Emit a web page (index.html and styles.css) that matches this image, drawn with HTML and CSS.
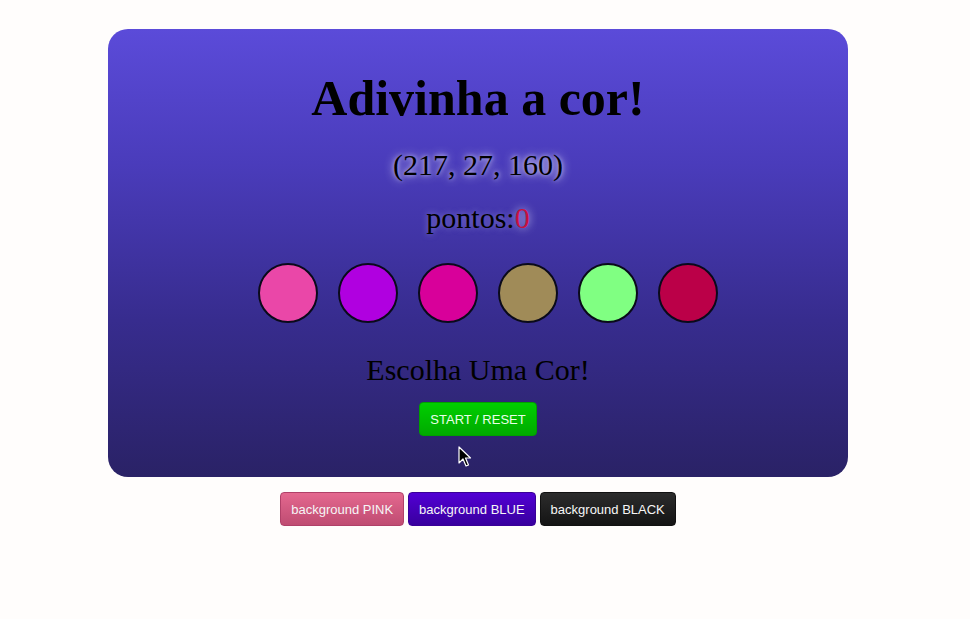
FILE: index.html
```html
<!DOCTYPE html>
<html lang="pt">
<head>
<meta charset="utf-8">
<title>Adivinha a cor!</title>
<link rel="stylesheet" href="styles.css">
</head>
<body>
<div class="page">
  <main class="card">
    <h1 class="title">Adivinha a cor!</h1>
    <p class="rgb">(217, 27, 160)</p>
    <p class="score">pontos:<span class="points">0</span></p>
    <div class="circles">
      <span class="circle c1"></span>
      <span class="circle c2"></span>
      <span class="circle c3"></span>
      <span class="circle c4"></span>
      <span class="circle c5"></span>
      <span class="circle c6"></span>
    </div>
    <p class="message">Escolha Uma Cor!</p>
    <button class="btn start">START / RESET</button>
  </main>
  <div class="themes">
    <button class="btn theme pink">background PINK</button>
    <button class="btn theme blue">background BLUE</button>
    <button class="btn theme black">background BLACK</button>
  </div>
  <svg class="cursor" width="14" height="22" viewBox="0 0 14 22"><path d="M1 1 L1 17 L5 13 L8 20 L10.5 19 L7.5 12 L12.5 12 Z" fill="#000" stroke="#fff" stroke-width="1.2" stroke-linejoin="round"/></svg>
</div>
</body>
</html>
```

FILE: styles.css
```css
html, body {
  margin: 0;
  padding: 0;
  background: #fffdfc;
}
.page {
  position: relative;
  width: 956px;
  padding-top: 29px;
  display: flex;
  flex-direction: column;
  align-items: center;
  font-family: "Liberation Serif", "Times New Roman", serif;
}
.card {
  width: 740px;
  height: 448px;
  box-sizing: border-box;
  padding-top: 40px;
  border-radius: 20px;
  background: linear-gradient(to bottom, #5b4bd9 0%, #4a3cbb 30%, #372c8e 65%, #2a2266 100%);
  display: flex;
  flex-direction: column;
  align-items: center;
  color: #000;
}
.title {
  margin: 0;
  font-size: 50px;
  line-height: 58px;
  font-weight: bold;
}
.rgb {
  margin: 21px 0 0;
  font-size: 30px;
  line-height: 34px;
  text-shadow: 0 0 10px rgba(235, 235, 255, 0.95), 0 0 4px rgba(235, 235, 255, 0.6);
}
.score {
  margin: 19px 0 0;
  font-size: 30px;
  line-height: 34px;
  text-shadow: 0 0 6px rgba(200, 200, 255, 0.5);
}
.points {
  color: #c8103e;
  text-shadow: 0 0 8px rgba(230, 230, 255, 0.95);
}
.circles {
  margin-top: 28px;
  margin-left: 20px;
  display: flex;
  gap: 20px;
}
.circle {
  width: 60px;
  height: 60px;
  box-sizing: border-box;
  border: 2px solid #0a0a1a;
  border-radius: 50%;
}
.c1 { background: #ea47a8; }
.c2 { background: #b000e0; }
.c3 { background: #d8009a; }
.c4 { background: #a08b58; }
.c5 { background: #80ff82; }
.c6 { background: #bb0048; }
.message {
  margin: 30px 0 0;
  font-size: 30px;
  line-height: 34px;
}
.btn {
  height: 34px;
  padding: 0 10px;
  border-radius: 4px;
  font-family: "Liberation Sans", Arial, sans-serif;
  font-size: 13px;
  color: #f6f6f6;
  cursor: pointer;
}
.start {
  margin-top: 15px;
  border: 1px solid #00a000;
  background: linear-gradient(to bottom, #00cf00, #00aa00);
  color: #e8ffe8;
}
.themes {
  margin-top: 15px;
  display: flex;
  gap: 4px;
}
.theme {
  padding: 0 10px;
}
.pink {
  border: 1px solid #b04068;
  background: linear-gradient(to bottom, #e4688f, #bf4c72);
}
.blue {
  border: 1px solid #3a0098;
  background: linear-gradient(to bottom, #5200d4, #38009e);
}
.black {
  border: 1px solid #111;
  background: linear-gradient(to bottom, #2c2c2c, #141414);
}
.cursor {
  position: absolute;
  left: 458px;
  top: 446px;
}
```
